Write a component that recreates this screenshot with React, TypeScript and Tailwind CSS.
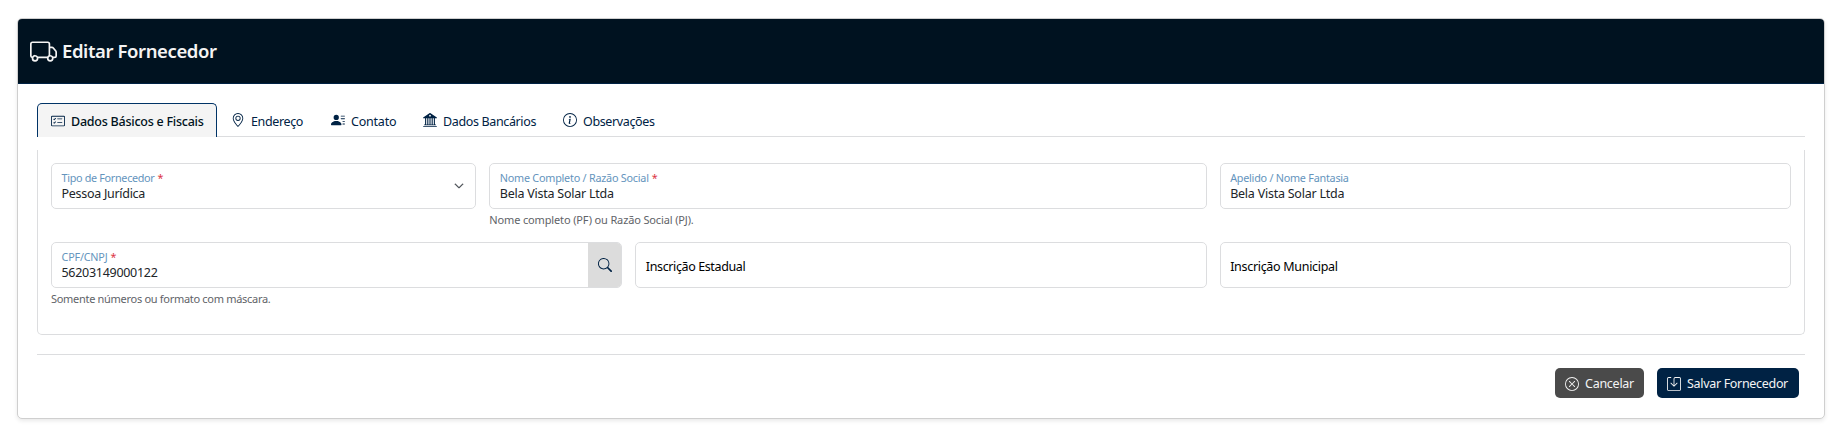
import type { ReactNode } from "react";
import {
  BsBank2,
  BsCardChecklist,
  BsChevronDown,
  BsGeoAlt,
  BsInfoCircle,
  BsPersonLinesFill,
  BsSave,
  BsSearch,
  BsTruck,
  BsXCircle,
} from "react-icons/bs";

const tabs = [
  { icon: BsGeoAlt, label: "Endereço", box: "w-[100px]", tracking: "tracking-[-0.37px]" },
  { icon: BsPersonLinesFill, label: "Contato", box: "w-[92px]", tracking: "tracking-[-0.21px]" },
  { icon: BsBank2, label: "Dados Bancários", box: "w-[140px]", tracking: "tracking-[-0.36px]" },
  { icon: BsInfoCircle, label: "Observações", box: "w-[119px]", tracking: "tracking-[-0.37px]" },
];

type FieldProps = {
  label: string;
  labelTracking: string;
  value: string;
  valueTracking: string;
  required?: boolean;
  addon?: ReactNode;
};

function Field({ label, labelTracking, value, valueTracking, required, addon }: FieldProps) {
  return (
    <div className="flex h-[46px] overflow-hidden rounded-[5px] border border-[#dcdddf] bg-white">
      <div className="flex min-w-0 flex-1 flex-col pl-[9.5px] pt-[6px] whitespace-nowrap">
        <div className={`text-[10.8px] leading-[15px] text-[#6494bd] ${labelTracking}`}>
          {label}
          {required && <span className="ml-[3px] text-[#dc3545]">*</span>}
        </div>
        <div className={`mt-px text-[12.5px] leading-[16px] text-[#212529] ${valueTracking}`}>{value}</div>
      </div>
      {addon}
    </div>
  );
}

function EmptyField({ label, tracking }: { label: string; tracking: string }) {
  return (
    <div className={`flex h-[46px] items-center rounded-[5px] border border-[#dcdddf] bg-white pl-[9.5px] pt-[4px] text-[12.5px] leading-[18px] text-black ${tracking}`}>
      {label}
    </div>
  );
}

export default function App() {
  return (
    <div className="h-[445px] w-[1844px] bg-white pt-[18px] pl-[17px] font-['Noto_Sans','Open_Sans',sans-serif]">
      <section className="flex h-[401px] w-[1808px] flex-col overflow-hidden rounded-[5px] border border-[#cfcfcf] bg-white shadow-[0_2px_4px_rgba(0,0,0,0.09)]">
        <header className="flex h-[65px] shrink-0 items-center gap-[5px] border-b border-[#002244] bg-[#001220] pl-[12px] text-[#f4f4f4]">
          <BsTruck className="size-[27px]" />
          <h1 className="text-[18.5px] leading-[26px] font-semibold tracking-[-0.4px]">Editar Fornecedor</h1>
        </header>

        <div className="flex flex-col px-[19px] pt-[19px]">
          <nav className="flex h-[34px] text-[12.5px] leading-[18px] text-[#002244]">
            <div className="flex w-[180px] items-center gap-[6px] rounded-t-[5px] border border-b-0 border-[#003366] bg-[#f4f4f4] pl-[13px] font-medium text-[#001220]">
              <BsCardChecklist className="size-[14px] text-[#002244]" />
              <span className="pt-[3px] tracking-[-0.24px] whitespace-nowrap">Dados Básicos e Fiscais</span>
            </div>
            <div className="flex flex-1 border-b border-[#dcdddf]">
              {tabs.map(({ icon: Icon, label, box, tracking }) => (
                <div key={label} className={`flex items-center gap-[6px] pt-px pl-[14px] ${box}`}>
                  <Icon className="size-[14px] shrink-0" />
                  <span className={`pt-[3px] whitespace-nowrap ${tracking}`}>{label}</span>
                </div>
              ))}
            </div>
          </nav>

          <div className="mt-[13px] h-[185px] rounded-b-[5px] border border-t-0 border-[#dcdddf] px-[13px] pt-[13px]">
            <div className="grid h-[79px] grid-cols-12 gap-x-[13px]">
              <div className="col-span-3">
                <Field
                  label="Tipo de Fornecedor"
                  labelTracking="tracking-[-0.31px]"
                  value="Pessoa Jurídica"
                  valueTracking="tracking-[-0.29px]"
                  required
                  addon={<BsChevronDown className="mt-[17px] mr-[11px] size-[10px] stroke-current text-[#343a40] [stroke-width:1]" />}
                />
              </div>
              <div className="col-span-5">
                <Field
                  label="Nome Completo / Razão Social"
                  labelTracking="tracking-[-0.225px]"
                  value="Bela Vista Solar Ltda"
                  valueTracking="tracking-[-0.235px]"
                  required
                />
                <p className="mt-[3px] text-[11px] leading-[16px] tracking-[-0.14px] text-[#5f6368]">
                  Nome completo (PF) ou Razão Social (PJ).
                </p>
              </div>
              <div className="col-span-4">
                <Field
                  label="Apelido / Nome Fantasia"
                  labelTracking="tracking-[-0.24px]"
                  value="Bela Vista Solar Ltda"
                  valueTracking="tracking-[-0.235px]"
                />
              </div>
            </div>

            <div className="grid grid-cols-3 gap-x-[13px]">
              <div>
                <Field
                  label="CPF/CNPJ"
                  labelTracking="tracking-[-0.19px]"
                  value="56203149000122"
                  valueTracking="tracking-[-0.29px]"
                  required
                  addon={
                    <div className="flex w-[33px] items-center justify-center bg-[#dcdcdc] pl-px text-[#002244]">
                      <BsSearch className="size-[14px]" />
                    </div>
                  }
                />
                <p className="mt-[3px] text-[11px] leading-[16px] tracking-[-0.3px] text-[#5f6368]">
                  Somente números ou formato com máscara.
                </p>
              </div>
              <EmptyField label="Inscrição Estadual" tracking="tracking-[-0.38px]" />
              <EmptyField label="Inscrição Municipal" tracking="tracking-[-0.305px]" />
            </div>
          </div>

          <footer className="mt-[19px] flex justify-end gap-[13px] border-t border-[#dcdddf] pt-[13px] pr-[6px] text-[12.5px] leading-[18px] text-[#f4f4f4]">
            <button className="flex h-[30px] w-[89px] items-center gap-[6px] rounded-[5px] bg-[#4a4a4a] pt-px pl-[10px]">
              <BsXCircle className="size-[14px]" />
              <span className="pt-px tracking-[-0.26px]">Cancelar</span>
            </button>
            <button className="flex h-[30px] w-[142px] items-center gap-[6px] rounded-[5px] bg-[#002244] pt-px pl-[10px]">
              <BsSave className="size-[14px]" />
              <span className="pt-px tracking-[-0.315px] whitespace-nowrap">Salvar Fornecedor</span>
            </button>
          </footer>
        </div>
      </section>
    </div>
  );
}
